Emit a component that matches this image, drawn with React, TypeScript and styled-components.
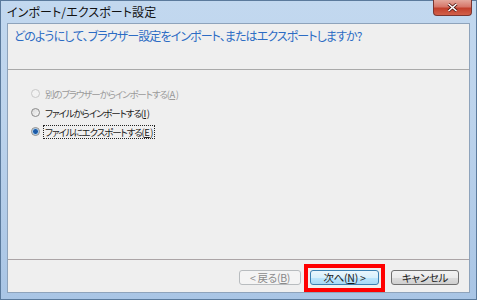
import styled, { createGlobalStyle } from "styled-components";

const GlobalStyle = createGlobalStyle`
    html, body {
        margin: 0;
        padding: 0;
        background: #c6daef;
    }
    body {
        font-family: "Noto Sans CJK JP", "Noto Sans", sans-serif;
        font-feature-settings: "palt";
    }
`;

const Window = styled.div`
    width: 477px;
    height: 300px;
    box-sizing: border-box;
    display: flex;
    flex-direction: column;
    border: 1px solid #5b7a9c;
    background: linear-gradient(180deg, #c2d8ef 0%, #bcd3ec 40%, #a9c5e5 100%);
`;

const TitleBar = styled.div`
    height: 22px;
    display: flex;
    justify-content: space-between;
    align-items: flex-start;
    padding-left: 6px;
`;

const Title = styled.span`
    font-size: 12px;
    line-height: 22px;
    color: #111;
    letter-spacing: 0.1px;
`;

const CloseButton = styled.div`
    width: 37px;
    height: 15px;
    margin-right: 4px;
    margin-top: -1px;
    border: 1px solid #7a3530;
    border-top: none;
    border-radius: 0 0 4px 4px;
    background: linear-gradient(180deg, #e4a89c 0%, #d6776a 45%, #c2402c 55%, #d2604a 100%);
    display: flex;
    align-items: center;
    justify-content: center;
`;

const Client = styled.div`
    flex: 1;
    margin: 0 6px 6px 6px;
    border: 1px solid #8ea3bb;
    background: #efefef;
    display: flex;
    flex-direction: column;
`;

const Header = styled.div`
    height: 46px;
    box-sizing: border-box;
    padding: 3px 0 0 6px;
    border-bottom: 1px solid #a9a9a9;
    font-size: 12px;
    line-height: 17px;
    color: #2c6cc4;
    letter-spacing: -0.9px;
`;

const Options = styled.div`
    flex: 1;
    display: flex;
    flex-direction: column;
    gap: 6px;
    padding: 17px 0 0 23px;
`;

const OptionRow = styled.div<{ $disabled?: boolean }>`
    display: flex;
    align-items: center;
    gap: 4px;
    height: 13px;
    font-size: 9.5px;
    color: ${({ $disabled }) => ($disabled ? "#9a9a9a" : "#1a1a1a")};
    letter-spacing: -1.1px;
`;

const Radio = styled.span<{ $checked?: boolean; $disabled?: boolean }>`
    width: 9px;
    height: 9px;
    border-radius: 50%;
    box-sizing: border-box;
    border: 1px solid ${({ $disabled }) => ($disabled ? "#c8c8c8" : "#8a8a8a")};
    background: ${({ $checked, $disabled }) =>
        $checked
            ? "radial-gradient(circle, #1c5aa6 0 2px, #6fa8dc 2.5px, #e8eef4 3.5px)"
            : $disabled
            ? "#f2f2f2"
            : "linear-gradient(135deg, #d8d8d8, #f8f8f8)"};
    flex-shrink: 0;
`;

const Label = styled.span<{ $focused?: boolean }>`
    line-height: 12px;
    padding: 0 2px 0 1px;
    outline: ${({ $focused }) => ($focused ? "1px dotted #222" : "none")};
`;

const Key = styled.u`
    letter-spacing: 0;
    margin: 0 0.5px;
`;

const Footer = styled.div`
    height: 33px;
    box-sizing: border-box;
    border-top: 1px solid #aba4a6;
    display: flex;
    justify-content: flex-end;
    align-items: flex-start;
    padding: 10px 10px 0 0;
`;

const Button = styled.div<{ $variant?: "disabled" | "default"; $width: number; $gap?: number }>`
    position: relative;
    width: ${({ $width }) => $width}px;
    margin-left: ${({ $gap }) => $gap ?? 0}px;
    height: 15px;
    box-sizing: border-box;
    border-radius: 3px;
    display: flex;
    align-items: center;
    justify-content: center;
    font-size: 10.5px;
    letter-spacing: -0.3px;
    border: 1px solid
        ${({ $variant }) =>
            $variant === "disabled" ? "#b8bcbf" : $variant === "default" ? "#3c7fb1" : "#707070"};
    color: ${({ $variant }) => ($variant === "disabled" ? "#8a8a8a" : "#1a1a1a")};
    background: ${({ $variant }) =>
        $variant === "disabled"
            ? "#f4f4f4"
            : $variant === "default"
            ? "linear-gradient(180deg, #eaf6fd 0%, #d9f0fc 50%, #bee6fd 50%, #a7d9f5 100%)"
            : "linear-gradient(180deg, #f2f2f2 0%, #ebebeb 50%, #dddddd 50%, #cfcfcf 100%)"};
`;

const Highlight = styled.div`
    position: absolute;
    left: -7px;
    top: -7px;
    right: -7px;
    bottom: -8px;
    border: 4px solid #ff0000;
`;

export default function App() {
    return (
        <>
            <GlobalStyle />
            <Window>
                <TitleBar>
                    <Title>インポート/エクスポート設定</Title>
                    <CloseButton>
                        <svg width="11" height="9" viewBox="0 0 11 9">
                            <path d="M1.5 1 L9.5 8 M9.5 1 L1.5 8" stroke="#4a1410" strokeWidth="3" />
                            <path d="M1.5 1 L9.5 8 M9.5 1 L1.5 8" stroke="#fff" strokeWidth="1.6" />
                        </svg>
                    </CloseButton>
                </TitleBar>
                <Client>
                    <Header>どのようにして、ブラウザー設定をインポート、またはエクスポートしますか?</Header>
                    <Options>
                        <OptionRow $disabled>
                            <Radio $disabled />
                            <Label>
                                別のブラウザーからインポートする(<Key>A</Key>)
                            </Label>
                        </OptionRow>
                        <OptionRow>
                            <Radio />
                            <Label>
                                ファイルからインポートする(<Key>I</Key>)
                            </Label>
                        </OptionRow>
                        <OptionRow>
                            <Radio $checked />
                            <Label $focused>
                                ファイルにエクスポートする(<Key>E</Key>)
                            </Label>
                        </OptionRow>
                    </Options>
                    <Footer>
                        <Button $variant="disabled" $width={62}>
                            &lt; 戻る(<u>B</u>)
                        </Button>
                        <Button $variant="default" $width={69} $gap={9}>
                            次へ(<u>N</u>) &gt;
                            <Highlight />
                        </Button>
                        <Button $width={68} $gap={12}>
                            キャンセル
                        </Button>
                    </Footer>
                </Client>
            </Window>
        </>
    );
}
